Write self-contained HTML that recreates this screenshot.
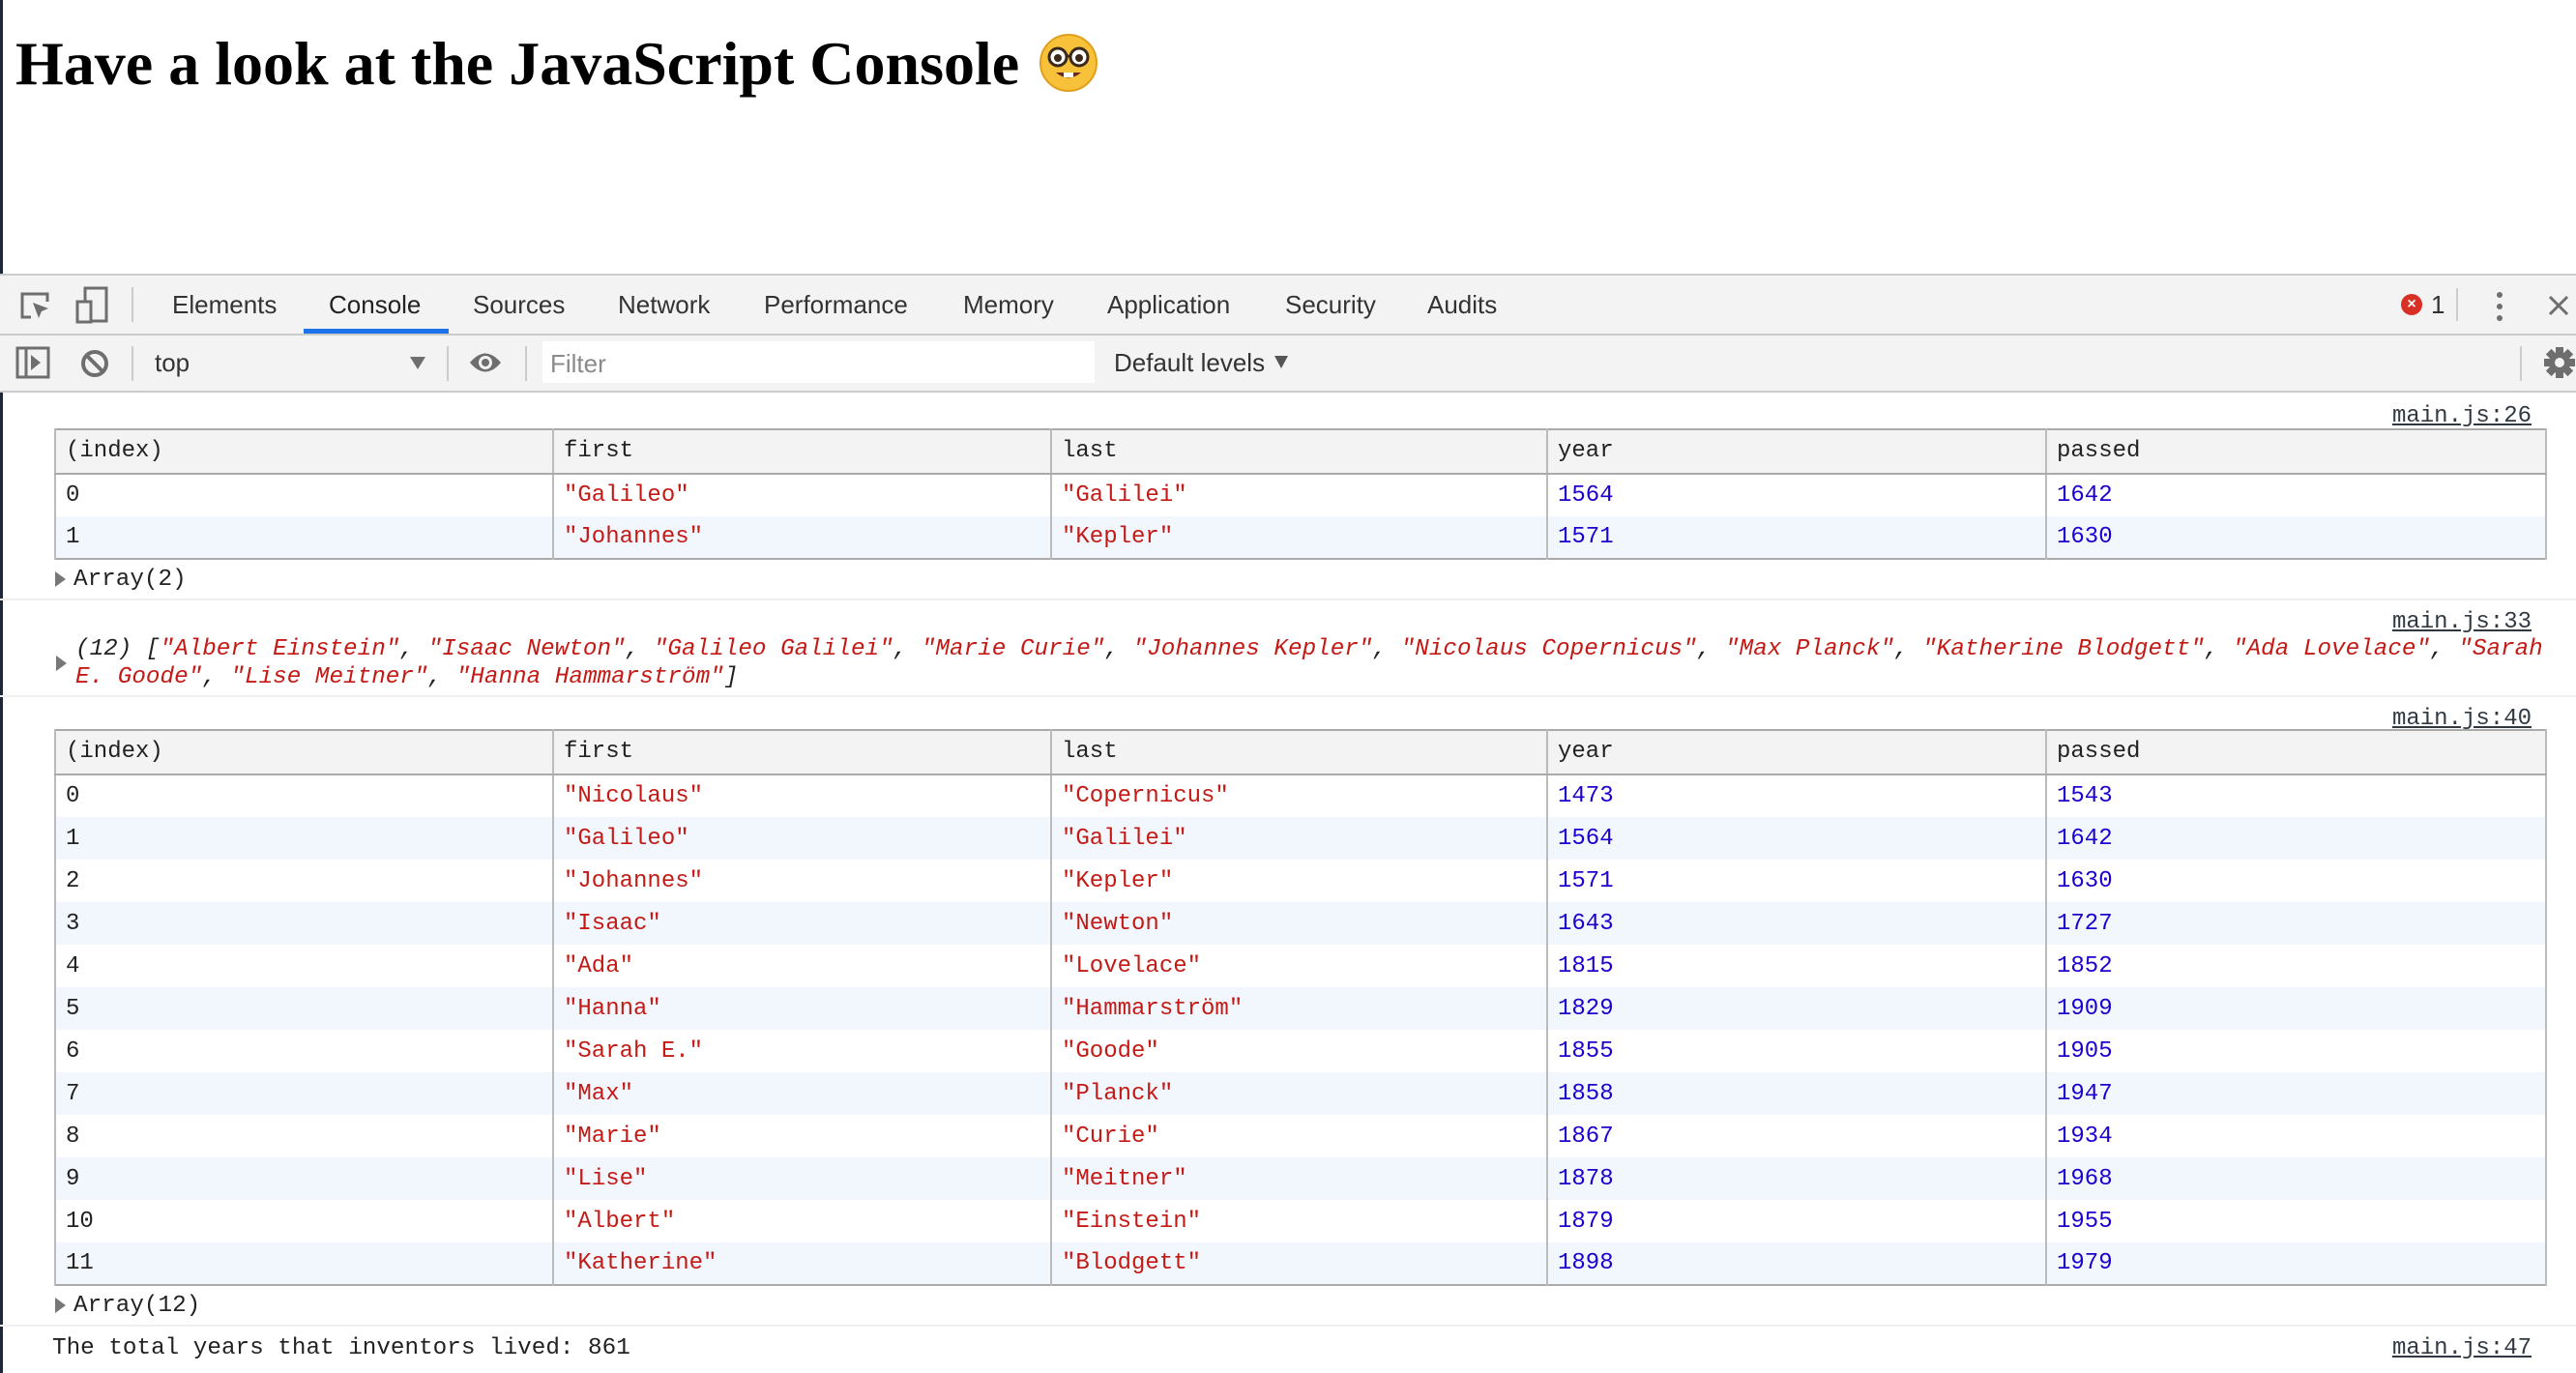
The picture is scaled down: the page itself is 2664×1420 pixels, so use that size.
<!DOCTYPE html>
<html><head><meta charset="utf-8"><style>
*{box-sizing:border-box;margin:0;padding:0}
html,body{width:2664px;height:1420px;overflow:hidden;background:#fff}
body{position:relative;font-family:"Liberation Sans",sans-serif}
.a{position:absolute;white-space:nowrap}
h1{position:absolute;left:16px;top:28px;font-family:"Liberation Serif",serif;font-weight:bold;font-size:64px;line-height:76px;color:#000}
.bar{position:absolute;left:0;width:2664px;background:#f3f3f3}
.tab{position:absolute;top:285px;height:61px;line-height:61px;font-size:26px;color:#333}
.mono{font-family:"Liberation Mono",monospace;font-size:24.3px;color:#222}
.sep{position:absolute;width:2px;background:#ccc}
.hr{position:absolute;left:0;width:2664px;height:2px;background:#efefef}
table{position:absolute;left:56px;width:2578px;border-collapse:collapse;table-layout:fixed;font-family:"Liberation Mono",monospace;font-size:24px;color:#222}
td,th{border-left:2px solid #bbb;border-right:2px solid #bbb;padding:0 0 0 10px;text-align:left;font-weight:normal;white-space:nowrap;overflow:hidden;vertical-align:middle}
th{background:#f3f3f3;height:46px;border-bottom:2px solid #aaa;padding-bottom:1px}
td{height:44px;padding-bottom:0}
table{border:2px solid #aaa}
tr:nth-child(odd) td{background:#f2f7fd}
.s{color:#c41a16}.n{color:#1c00cf}
.link{position:absolute;right:46px;font-family:"Liberation Mono",monospace;font-size:24px;color:#303942;text-decoration:underline}
.tri{position:absolute;width:0;height:0;border-top:8px solid transparent;border-bottom:8px solid transparent;border-left:11px solid #777}
</style></head><body>
<div class="a" style="left:0;top:0;width:3px;height:1420px;background:#1d2738"></div>
<h1>Have a look at the JavaScript Console</h1>
<svg class="a" style="left:1074px;top:34px" width="62" height="62" viewBox="0 0 62 62">
<circle cx="31" cy="31" r="29" fill="#f7c13a"/><circle cx="31" cy="31" r="29" fill="none" stroke="#e0a01e" stroke-width="2"/>
<circle cx="20" cy="25" r="9" fill="#fff" stroke="#3b2a1a" stroke-width="3"/><circle cx="42" cy="25" r="9" fill="#fff" stroke="#3b2a1a" stroke-width="3"/>
<line x1="29" y1="24" x2="33" y2="24" stroke="#3b2a1a" stroke-width="3"/>
<circle cx="20" cy="26" r="4" fill="#3b2a1a"/><circle cx="42" cy="26" r="4" fill="#3b2a1a"/>
<path d="M18 41 Q31 52 44 41 Z" fill="#6b2a1a"/><rect x="26" y="41" width="10" height="5" fill="#fff"/>
</svg>

<div class="bar" style="top:283px;height:2px;background:#cbcbcb"></div>
<div class="bar" style="top:285px;height:60px"></div>
<div class="bar" style="top:345px;height:2px;background:#cbcbcb"></div>
<div class="bar" style="top:347px;height:57px"></div>
<div class="bar" style="top:404px;height:2px;background:#cbcbcb"></div>

<svg class="a" style="left:20px;top:300px" width="34" height="34" viewBox="0 0 34 34"><path d="M12 28H3V4h26v8" fill="none" stroke="#6e6e6e" stroke-width="3"/><path d="M14 13l16 6-7 3-3 7z" fill="#6e6e6e"/></svg>
<svg class="a" style="left:78px;top:296px" width="36" height="40" viewBox="0 0 36 40"><rect x="10" y="2" width="22" height="34" fill="none" stroke="#6e6e6e" stroke-width="3"/><rect x="2" y="16" width="14" height="21" fill="#f3f3f3" stroke="#6e6e6e" stroke-width="3"/></svg>
<div class="sep" style="left:136px;top:297px;height:36px"></div>
<div class="tab" style="left:178px">Elements</div>
<div class="tab" style="left:340px;color:#222">Console</div>
<div class="a" style="left:314px;top:340px;width:150px;height:5px;background:#1a73e8"></div>
<div class="tab" style="left:489px">Sources</div>
<div class="tab" style="left:639px">Network</div>
<div class="tab" style="left:790px">Performance</div>
<div class="tab" style="left:996px">Memory</div>
<div class="tab" style="left:1145px">Application</div>
<div class="tab" style="left:1329px">Security</div>
<div class="tab" style="left:1476px">Audits</div>
<div class="a" style="left:2483px;top:304px;width:22px;height:22px;border-radius:50%;background:#d93025;color:#fff;font-size:16px;font-weight:bold;text-align:center;line-height:22px">×</div>
<div class="tab" style="left:2514px;color:#333">1</div>
<div class="sep" style="left:2540px;top:298px;height:34px"></div>
<svg class="a" style="left:2578px;top:300px" width="14" height="34"><circle cx="7" cy="5" r="3" fill="#6e6e6e"/><circle cx="7" cy="17" r="3" fill="#6e6e6e"/><circle cx="7" cy="29" r="3" fill="#6e6e6e"/></svg>
<svg class="a" style="left:2634px;top:304px" width="24" height="24"><path d="M3 3L21 21M21 3L3 21" stroke="#6e6e6e" stroke-width="3"/></svg>

<svg class="a" style="left:16px;top:358px" width="36" height="34" viewBox="0 0 36 34"><rect x="2" y="2" width="32" height="30" fill="none" stroke="#6e6e6e" stroke-width="3"/><line x1="11" y1="2" x2="11" y2="32" stroke="#6e6e6e" stroke-width="3"/><path d="M16 9l10 8-10 8z" fill="#6e6e6e"/></svg>
<svg class="a" style="left:82px;top:360px" width="32" height="32" viewBox="0 0 32 32"><circle cx="16" cy="16" r="12" fill="none" stroke="#6e6e6e" stroke-width="4"/><line x1="8" y1="8" x2="24" y2="24" stroke="#6e6e6e" stroke-width="4"/></svg>
<div class="sep" style="left:136px;top:358px;height:36px"></div>
<div class="tab" style="left:160px;top:346px;height:58px;line-height:58px;color:#333">top</div>
<div class="a" style="left:424px;top:369px;width:0;height:0;border-left:8px solid transparent;border-right:8px solid transparent;border-top:13px solid #6e6e6e"></div>
<div class="sep" style="left:462px;top:358px;height:36px"></div>
<svg class="a" style="left:484px;top:362px" width="36" height="26" viewBox="0 0 36 26"><path d="M2 13Q18-6 34 13Q18 32 2 13z" fill="#6e6e6e"/><circle cx="18" cy="13" r="7" fill="#f3f3f3"/><circle cx="18" cy="13" r="4" fill="#6e6e6e"/></svg>
<div class="sep" style="left:543px;top:358px;height:36px"></div>
<div class="a" style="left:561px;top:353px;width:571px;height:43px;background:#fff"></div>
<div class="tab" style="left:569px;top:347px;height:58px;line-height:58px;color:#8a8a8a">Filter</div>
<div class="tab" style="left:1152px;top:346px;height:58px;line-height:58px;color:#333">Default levels</div>
<div class="a" style="left:1318px;top:368px;width:0;height:0;border-left:7px solid transparent;border-right:7px solid transparent;border-top:13px solid #555"></div>
<div class="sep" style="left:2606px;top:358px;height:36px"></div>
<svg class="a" style="left:2630px;top:358px" width="34" height="34" viewBox="0 0 34 34"><g fill="#6e6e6e"><circle cx="17" cy="17" r="11"/><rect x="13" y="1" width="8" height="32"/><rect x="1" y="13" width="32" height="8"/><rect x="13" y="1" width="8" height="32" transform="rotate(45 17 17)"/><rect x="13" y="1" width="8" height="32" transform="rotate(-45 17 17)"/></g><circle cx="17" cy="17" r="5" fill="#f3f3f3"/></svg>

<div class="link" style="top:417px">main.js:26</div>
<table style="top:443px">
<colgroup><col style="width:515px"><col style="width:515px"><col style="width:513px"><col style="width:516px"><col></colgroup>
<tr><th>(index)</th><th>first</th><th>last</th><th>year</th><th>passed</th></tr>
<tr><td>0</td><td class="s">"Galileo"</td><td class="s">"Galilei"</td><td class="n">1564</td><td class="n">1642</td></tr>
<tr><td>1</td><td class="s">"Johannes"</td><td class="s">"Kepler"</td><td class="n">1571</td><td class="n">1630</td></tr>
</table>
<div class="tri" style="left:57px;top:591px"></div>
<div class="a mono" style="left:76px;top:586px">Array(2)</div>
<div class="hr" style="top:619px"></div>
<div class="link" style="top:630px">main.js:33</div>
<div class="tri" style="left:58px;top:678px"></div>
<div class="a mono" style="left:78px;top:657px;line-height:29px;font-style:italic"><span>(12) [</span><span class="s">"Albert Einstein"</span>, <span class="s">"Isaac Newton"</span>, <span class="s">"Galileo Galilei"</span>, <span class="s">"Marie Curie"</span>, <span class="s">"Johannes Kepler"</span>, <span class="s">"Nicolaus Copernicus"</span>, <span class="s">"Max Planck"</span>, <span class="s">"Katherine Blodgett"</span>, <span class="s">"Ada Lovelace"</span>, <span class="s">"Sarah</span><br><span class="s">E. Goode"</span>, <span class="s">"Lise Meitner"</span>, <span class="s">"Hanna Hammarström"</span>]</div>
<div class="hr" style="top:719px"></div>
<div class="link" style="top:730px">main.js:40</div>
<table style="top:754px">
<colgroup><col style="width:515px"><col style="width:515px"><col style="width:513px"><col style="width:516px"><col></colgroup>
<tr><th>(index)</th><th>first</th><th>last</th><th>year</th><th>passed</th></tr>
<tr><td>0</td><td class="s">"Nicolaus"</td><td class="s">"Copernicus"</td><td class="n">1473</td><td class="n">1543</td></tr>
<tr><td>1</td><td class="s">"Galileo"</td><td class="s">"Galilei"</td><td class="n">1564</td><td class="n">1642</td></tr>
<tr><td>2</td><td class="s">"Johannes"</td><td class="s">"Kepler"</td><td class="n">1571</td><td class="n">1630</td></tr>
<tr><td>3</td><td class="s">"Isaac"</td><td class="s">"Newton"</td><td class="n">1643</td><td class="n">1727</td></tr>
<tr><td>4</td><td class="s">"Ada"</td><td class="s">"Lovelace"</td><td class="n">1815</td><td class="n">1852</td></tr>
<tr><td>5</td><td class="s">"Hanna"</td><td class="s">"Hammarström"</td><td class="n">1829</td><td class="n">1909</td></tr>
<tr><td>6</td><td class="s">"Sarah E."</td><td class="s">"Goode"</td><td class="n">1855</td><td class="n">1905</td></tr>
<tr><td>7</td><td class="s">"Max"</td><td class="s">"Planck"</td><td class="n">1858</td><td class="n">1947</td></tr>
<tr><td>8</td><td class="s">"Marie"</td><td class="s">"Curie"</td><td class="n">1867</td><td class="n">1934</td></tr>
<tr><td>9</td><td class="s">"Lise"</td><td class="s">"Meitner"</td><td class="n">1878</td><td class="n">1968</td></tr>
<tr><td>10</td><td class="s">"Albert"</td><td class="s">"Einstein"</td><td class="n">1879</td><td class="n">1955</td></tr>
<tr><td>11</td><td class="s">"Katherine"</td><td class="s">"Blodgett"</td><td class="n">1898</td><td class="n">1979</td></tr>
</table>
<div class="tri" style="left:57px;top:1342px"></div>
<div class="a mono" style="left:76px;top:1337px">Array(12)</div>
<div class="hr" style="top:1370px"></div>
<div class="a mono" style="left:54px;top:1381px">The total years that inventors lived: 861</div>
<div class="link" style="top:1381px">main.js:47</div>
</body></html>
